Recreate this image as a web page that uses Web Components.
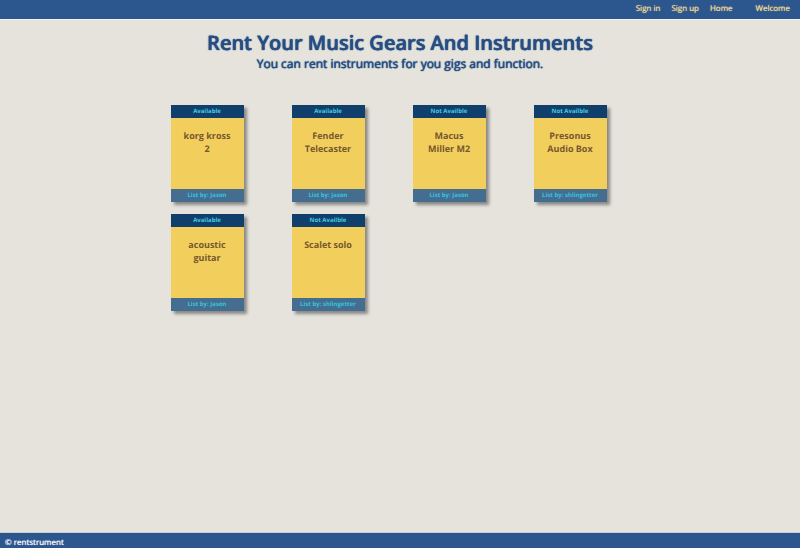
<!DOCTYPE html>
<html lang="en">
<head>
<meta charset="utf-8">
<meta name="viewport" content="width=device-width, initial-scale=1">
<title>rentstrument</title>
<style>
body{margin:0;background:#e5e3db;font-family:"Open Sans","Noto Sans",sans-serif;text-rendering:geometricPrecision}
</style>
</head>
<body>
<rent-app></rent-app>
<script>
const define=(name,html)=>customElements.define(name,class extends HTMLElement{
  constructor(){
    super();
    const t=document.createElement('template');
    t.innerHTML=html;
    this.attachShadow({mode:'open'}).append(t.content.cloneNode(true));
  }
});

define('site-nav',`<style>
:host{display:block;background:#2c568e;border-bottom:1px solid #eef0f2}
nav{display:flex;justify-content:flex-end;gap:11px;padding:3px 10px 4px;font-size:8px;line-height:12px}
a,span{color:#f3dc94;text-decoration:none;text-shadow:0 0 1px currentColor}
span{margin-left:12px}
</style>
<nav><a href="#signin">Sign in</a><a href="#signup">Sign up</a><a href="#home">Home</a><span>Welcome</span></nav>`);

define('page-heading',`<style>
:host{display:block;text-align:center;color:#274d83;padding:9px 16px 0}
h1{margin:0;font-size:20px;line-height:28px;font-weight:600;text-shadow:0 0 1px currentColor,0 0 1px currentColor}
p{margin:0;font-size:12px;line-height:14px;font-weight:500;text-shadow:0 0 1px currentColor,0 0 1px currentColor}
</style>
<h1><slot></slot></h1><p><slot name="tagline"></slot></p>`);

define('gear-card',`<style>
:host{display:block}
article{display:flex;flex-direction:column;height:100%;min-height:97px;background:#f2cf5d;box-shadow:3px 3px 3px #8a8987;text-align:center;font-weight:700}
header,footer{font-size:6px;line-height:13px;white-space:nowrap}
header{background:#113f6c;color:#45c9e0}
footer{background:#456d90;color:#35c3dc}
h2{flex:1;margin:0;padding:11px 12px 0;font-size:9px;line-height:13px;font-weight:700;color:#77572f}
</style>
<article><header><slot name="status"></slot></header><h2><slot></slot></h2><footer>List by: <slot name="owner"></slot></footer></article>`);

define('gear-grid',`<style>
:host{display:grid;grid-template-columns:repeat(4,73px);justify-content:center;gap:12px 48px;padding:34px 23px 24px 0}
</style><slot></slot>`);

define('site-footer',`<style>
:host{display:block;background:#2c568e;border-top:1px solid #c9d0d8;color:#fff;font-size:8px;line-height:10px;padding:5px 5px 0;text-shadow:0 0 1px currentColor}
</style><slot></slot>`);

const gear=[
  ['Available','korg kross 2','Jason'],
  ['Available','Fender Telecaster','Jason'],
  ['Not Availble','Macus Miller M2','Jason'],
  ['Not Availble','Presonus Audio Box','shlingetter'],
  ['Available','acoustic guitar','Jason'],
  ['Not Availble','Scalet solo','shlingetter']
];
define('rent-app',`<style>
:host{display:flex;flex-direction:column;min-height:100vh}
main{flex:1}
</style>
<site-nav></site-nav>
<main>
<page-heading>Rent Your Music Gears And Instruments<span slot="tagline">You can rent instruments for you gigs and function.</span></page-heading>
<gear-grid>${gear.map(([status,name,owner])=>`<gear-card><span slot="status">${status}</span>${name}<span slot="owner">${owner}</span></gear-card>`).join('')}</gear-grid>
</main>
<site-footer>© rentstrument</site-footer>`);
</script>
</body>
</html>
